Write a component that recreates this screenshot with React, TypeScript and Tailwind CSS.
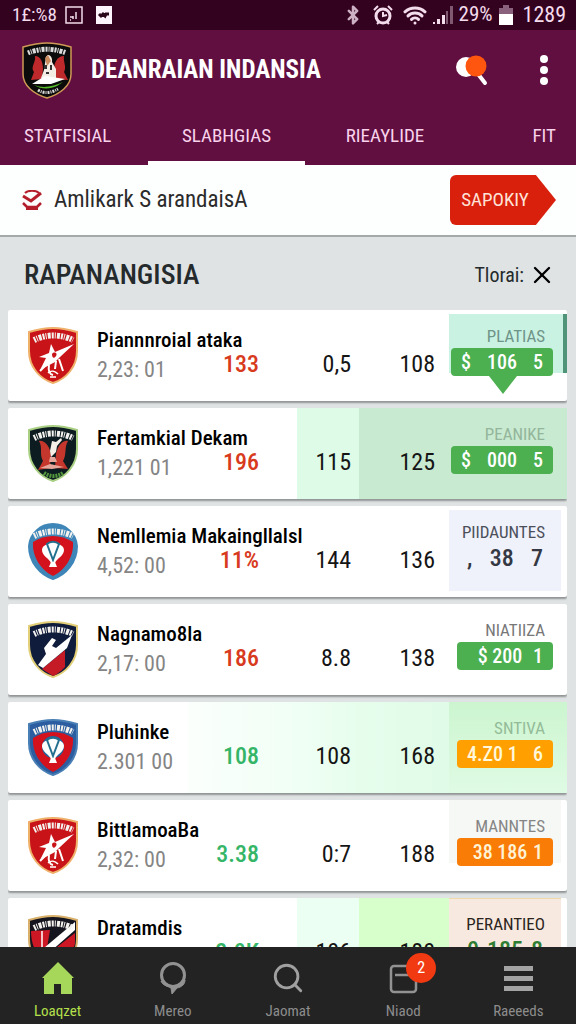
import { Bluetooth, Search, Wifi, X } from "lucide-react";

type Team = {
  name: string;
  time: string;
  values: [string, string, string];
  up?: boolean;
  crest: "red" | "black" | "blue" | "navy" | "shield" | "stripe";
  label: string;
  labelClass: string;
  badge: string[];
  badgeClass: string;
  cells: [string, string, string, string];
  pointer?: boolean;
};

const teams: Team[] = [
  {
    name: "Piannnroial ataka",
    time: "2,23: 01",
    values: ["133", "0,5", "108"],
    crest: "red",
    label: "PLATIAS",
    labelClass: "text-[#6f9488]",
    badge: ["$", "106", "5"],
    badgeClass: "bg-[#4caf50] text-white w-[102px] text-xl",
    cells: ["", "", "", "bg-[#c9f2e3] mt-1 mb-7 border-r-4 border-[#4f9478]"],
    pointer: true,
  },
  {
    name: "Fertamkial Dekam",
    time: "1,221 01",
    values: ["196", "115", "125"],
    crest: "black",
    label: "PEANIKE",
    labelClass: "text-[#93b59b]",
    badge: ["$", "000", "5"],
    badgeClass: "bg-[#4caf50] text-white w-[102px] text-xl",
    cells: ["", "bg-[#defbe8]", "bg-[#c8ead0]", "bg-[#c8ead0]"],
  },
  {
    name: "Nemllemia Makaingllalsl",
    time: "4,52: 00",
    values: ["11%", "144", "136"],
    crest: "blue",
    label: "PIIDAUNTES",
    labelClass: "text-[#4b4f5a]",
    badge: [",", "38", "7"],
    badgeClass: "w-[96px] text-[#343842] text-2xl",
    cells: ["", "", "", "bg-[#eff1fb] mt-1 mb-1.5 mr-1.5"],
  },
  {
    name: "Nagnamo8la",
    time: "2,17: 00",
    values: ["186", "8.8", "138"],
    crest: "navy",
    label: "NIATIIZA",
    labelClass: "text-[#777]",
    badge: ["", "$ 200", "1"],
    badgeClass: "bg-[#4caf50] text-white w-[96px] text-xl",
    cells: ["", "", "", ""],
  },
  {
    name: "Pluhinke",
    time: "2.301 00",
    values: ["108", "108", "168"],
    up: true,
    crest: "shield",
    label: "SNTIVA",
    labelClass: "text-[#93bb98]",
    badge: ["4.Z0 1", "6"],
    badgeClass: "bg-[#ffa000] text-[#fff8dc] w-[96px] text-xl",
    cells: [
      "bg-linear-to-r from-[#fbfffc] to-[#f0fff5]",
      "bg-linear-to-r from-[#f0fff5] to-[#e6fdec]",
      "bg-linear-to-r from-[#e6fdec] to-[#e0fbe8]",
      "bg-linear-to-b from-[#ccf5cf] to-[#dffbe4]",
    ],
  },
  {
    name: "BittlamoaBa",
    time: "2,32: 00",
    values: ["3.38", "0:7", "188"],
    up: true,
    crest: "red",
    label: "MANNTES",
    labelClass: "text-[#858585]",
    badge: ["", "38 186", "1"],
    badgeClass: "bg-[#f97c06] text-[#fff3d6] w-[96px] text-xl",
    cells: ["", "", "", "bg-[#f5f8f5] mb-7 mr-1.5"],
  },
  {
    name: "Dratamdis",
    time: "2,30: 00",
    values: ["2.0K", "106", "180"],
    up: true,
    crest: "stripe",
    label: "PERANTIEO",
    labelClass: "text-[#2c2420]",
    badge: ["0", "185", "8"],
    badgeClass: "w-[96px] text-[#2e7d32] text-2xl",
    cells: ["", "bg-[#ebfff3]", "bg-[#d6ffcb]", "bg-[#f7e9df] mr-1.5 border-t border-[#f0d9a8]"],
  },
];

const crestColors = {
  red: { edge: "#efb06a", fill: "#c81418" },
  black: { edge: "#a9cf83", fill: "#0d1c20" },
  blue: { edge: "#3f86b8", fill: "#3f86b8" },
  navy: { edge: "#e3cf77", fill: "#101c3c" },
  shield: { edge: "#4a7fb5", fill: "#2b5da0" },
  stripe: { edge: "#d9b06a", fill: "#15151f" },
};

function Crest({ kind }: { kind: Team["crest"] }) {
  const c = crestColors[kind];
  const outline =
    kind === "blue"
      ? "M25 1C37 1 48 10 49 23c0 16-11 29-24 33C12 52 1 39 1 23 2 10 13 1 25 1Z"
      : "M25 1c9 0 17 2 24 4v19c0 16-11 28-24 32C12 52 1 40 1 24V5c7-2 15-4 24-4Z";
  return (
    <svg viewBox="0 0 50 57" className="h-[57px] w-[50px]" aria-hidden="true">
      <path d={outline} fill={c.fill} stroke={c.edge} strokeWidth="2" />
      {(kind === "blue" || kind === "shield") && (
        <>
          <path d="M5 19c12-8 28-8 40 0 1 15-8 28-20 34C13 47 4 34 5 19Z" fill="#d3121d" />
          <circle cx="25" cy="28" r="11" fill={kind === "blue" ? "#d3121d" : "#25639c"} />
          <path d="M14 27c0-9 22-9 22 0 0 6-7 8-9 13h-4c-2-5-9-7-9-13Z" fill="#fff" />
          <path d="m19 21 6 16 6-16c-3-3-9-3-12 0Z" fill="#fff" stroke="#24718f" strokeWidth="2" />
          <path d="M21 44h8l-2-5h-4Z" fill="#fff" />
        </>
      )}
      {kind === "red" && (
        <>
          <path d="m23 17 4 8 19-8-14 13-5 5-15 8 6-12-7-1 10-4Z" fill="#fff" />
          <path d="m12 44 14-14M31 32l4 12M28 34l-1 8M21 38c-1 6 0 9 4 10" stroke="#fff" strokeWidth="2" fill="none" />
          <path d="M20 46c3-3 7-2 10 1M22 50h6" stroke="#fff" strokeWidth="1.5" fill="none" />
          <path d="M24 27c2-3 6-1 4 2s-4 2-4-2Z" fill="#c81418" />
        </>
      )}
      {kind === "black" && (
        <>
          <path d="M11 16c5-1 10 4 12 13l-1 14-12 2 5-9c-4-7 0-13-4-20ZM40 16c-5-1-10 4-12 13l-1 14 13 1-5-8c4-7 1-13 5-20Z" fill="#c5372d" />
          <path d="m33 13-5 4-4-1-2 10 1 6 5-5 1-6 5-6Z" fill="#f6efe8" />
          <path d="M22 32h5l2 5h-8ZM12 43l10-4 14 3-12 2Z" fill="#e7a69b" />
          <path d="M16 48c6 4 13 4 19 0" stroke="#54983d" strokeWidth="4" strokeDasharray="2 1" fill="none" />
        </>
      )}
      {kind === "navy" && (
        <>
          <path d="M14 48 37 29v17c-5 5-9 8-12 9Z" fill="#c51b26" />
          <path d="m44 14-5 13-24 20-5-3 8-11-2-6 8-10 4 2-4 6 4 2Z" fill="#fff" />
        </>
      )}
      {kind === "stripe" && (
        <>
          <path d="M3 16 22 15l-3 18-7 9C6 36 3 26 3 16ZM47 18v10c-2 12-10 21-22 26l-10-11Z" fill="#ce1724" />
          <path d="M47 7v8L14 44l-4-6 19-16Z" fill="#fff" />
          <path d="M14 16v17" stroke="#fff" strokeWidth="1.5" />
        </>
      )}
      {/* lettering band */}
      <path d="M6 13c12-6 27-6 39 0" fill="none" stroke="#f4f2ee" strokeWidth="6" strokeDasharray="2 1 1 1.2 3 1" />
    </svg>
  );
}

function ClubLogo() {
  return (
    <svg viewBox="0 0 50 57" className="h-[57px] w-[50px]" aria-hidden="true">
      <path d="M25 1c9 0 17 2 24 4v27c0 12-11 20-24 24C12 52 1 44 1 32V5c7-2 15-4 24-4Z" fill="#0b0b0b" stroke="#cf9a56" strokeWidth="1.5" />
      <path d="M6 11c12-5 26-5 38 0" fill="none" stroke="#ddd" strokeWidth="5" strokeDasharray="2 1 1 1 3 1" />
      <path d="M13 14c6 0 8 7 8 13l-1 10-11 1 3-8c-4-5 2-9 1-16ZM42 14c-7 0-10 7-10 14v9l14 1-4-8c3-5-1-10 0-16Z" fill="#be2a2c" />
      <path d="M24 15c3-5 7 1 6 5l4 7v9H19l3-8Z" fill="#f3ece4" />
      <path d="m23 16 3-3 3 6-4 5Z" fill="#c98b5e" />
      <path d="M22 23h3v4h-3ZM28 23h2v5h-2ZM24 30h3v2h-3Z" fill="#333" />
      <path d="m10 42 13-8 20 3-14 5Z" fill="#fff" />
      <path d="M12 43c10 4 20 1 29-3l-6 4c-7 3-15 4-23-1Z" fill="#55bd28" />
      <path d="M16 48c6 4 13 3 20-1" fill="none" stroke="#ddd" strokeWidth="3" strokeDasharray="2 1 1 1" />
    </svg>
  );
}

function StatusBar() {
  return (
    <div className="flex h-[30px] shrink-0 items-center bg-[#33021f] pr-2.5 pl-3 text-xl text-[#f3dcec]">
      <span className="text-[19px]">1£:%8</span>
      <svg viewBox="0 0 18 18" className="ml-2 size-[18px]" fill="none" stroke="currentColor" strokeWidth="1.5">
        <path d="M1 1h16v16H1zM5 14h1M8 13v-3M11 13V6M5 11h3" />
      </svg>
      <svg viewBox="0 0 18 18" className="ml-3 size-[18px]">
        <path d="M1 0h16v18H1z" fill="#fdf3fa" />
        <path d="M4 8l2 2 2-2 2 2 1-2h3" fill="none" stroke="#2a0419" strokeWidth="3" />
      </svg>
      <div className="ml-auto flex items-center gap-1.5">
        <Bluetooth className="size-5 opacity-80" strokeWidth={3} />
        <svg viewBox="0 0 20 20" className="ml-1 size-5" fill="none" stroke="currentColor">
          <circle cx="10" cy="11" r="7" strokeWidth="3" />
          <path d="M1 5l4-4M19 5l-4-4M4 19l2-2M16 19l-2-2" strokeWidth="2" />
          <path d="M10 7v4l4-1" strokeWidth="2" />
        </svg>
        <Wifi className="ml-1 size-6" strokeWidth={3} />
        <svg viewBox="0 0 20 20" className="size-5" fill="currentColor">
          <path d="M0 17h2v2H0zM4 14h3v5H4zM9 10h3v9H9z" />
          <path d="M13 6h2v13h-2zM17 1h3v18h-3z" opacity=".4" />
        </svg>
        <span className="text-[21px]">29%</span>
        <svg viewBox="0 0 14 20" className="h-5 w-3.5">
          <path d="M4 0h6v3h4v6H0V3h4z" fill="#89617c" />
          <path d="M0 9h14v11H0z" fill="#fff" />
        </svg>
        <span className="ml-1 text-[22px]">1289</span>
      </div>
    </div>
  );
}

function TeamRow({ team }: { team: Team }) {
  return (
    <li className="grid h-[91px] shrink-0 grid-cols-[89px_91fr_109fr_62fr_90fr_118fr] rounded-xs bg-white text-2xl text-[#151515] shadow-[0_2px_2px_rgba(0,0,0,0.35)]">
      <div className="pt-[17px] pl-5">
        <Crest kind={team.crest} />
      </div>
      <div className="z-10 pt-3.5 whitespace-nowrap">
        <h3 className="w-0 text-[21px] leading-8 font-medium text-black">{team.name}</h3>
        <p className="text-[22px] leading-7 text-[#858585]">{team.time}</p>
      </div>
      <div className={`pt-[38px] pr-[38px] text-right font-medium ${team.up ? "text-[#35b568]" : "text-[#d83a20]"} ${team.cells[0]}`}>
        {team.values[0]}
      </div>
      <div className={`pt-[38px] pr-2 text-right ${team.cells[1]}`}>{team.values[1]}</div>
      <div className={`pt-[38px] pr-3.5 text-right ${team.cells[2]}`}>{team.values[2]}</div>
      <div className="grid">
        <div className={`col-start-1 row-start-1 ${team.cells[3]}`} />
        <div className="col-start-1 row-start-1 flex flex-col items-end pt-3.5 pr-3.5">
          <span className={`pr-2 text-[17px] leading-6 ${team.labelClass}`}>{team.label}</span>
          <div className={`flex h-7 items-center justify-between rounded-sm px-2.5 font-medium whitespace-nowrap ${team.badgeClass}`}>
            {team.badge.map((part, i) => (
              <span key={i}>{part}</span>
            ))}
          </div>
          {team.pointer && (
            <svg viewBox="0 0 28 18" className="mr-9 h-[18px] w-7">
              <path d="M0 0h28L14 18z" fill="#4caf50" />
            </svg>
          )}
        </div>
      </div>
    </li>
  );
}

const navItem = "flex flex-col items-center gap-1.5 pt-3.5 text-[15px] leading-5";

function BottomNav() {
  return (
    <nav className="grid h-[77px] shrink-0 grid-cols-5 bg-[#232323] text-[#8d8d8d]">
      <a href="#home" className={`${navItem} text-[#b5e04c]`}>
        <svg viewBox="0 0 34 34" className="size-[34px]">
          <path d="M17 1 33 17h-2v16H20V23h-7v10H3V17H1z" fill="#a6d65a" />
        </svg>
        Loaqzet
      </a>
      <a href="#mereo" className={navItem}>
        <svg viewBox="0 0 34 34" className="size-[34px]" fill="none" stroke="#929292">
          <circle cx="17" cy="14" r="11.5" strokeWidth="3" />
          <path d="M5 20c2 5 7 5 10 7l1 6 5-6c5-1 8-4 8-8-4 6-9 7-12 7s-8-1-12-6Z" fill="#929292" />
        </svg>
        Mereo
      </a>
      <a href="#search" className={navItem}>
        <Search className="size-[34px] text-[#a0a0a0]" strokeWidth={2} />
        Jaomat
      </a>
      <a href="#news" className={navItem}>
        <span className="relative">
          <svg viewBox="0 0 34 34" className="size-[34px]" fill="none" stroke="#929292" strokeWidth="2.5">
            <rect x="5" y="5" width="25" height="26" rx="3" />
            <path d="M9 14h20" />
          </svg>
          <span className="absolute -top-2 left-5 flex size-[30px] items-center justify-center rounded-full bg-[#f23a12] text-base text-white">
            2
          </span>
        </span>
        Niaod
      </a>
      <a href="#more" className={navItem}>
        <svg viewBox="0 0 34 34" className="size-[34px]" fill="#a3a3a3">
          <path d="M3 5h29v5H3zM3 15h29v5H3zM3 25h29v5H3z" />
        </svg>
        Raeeeds
      </a>
    </nav>
  );
}

export default function App() {
  return (
    <div className="flex h-screen flex-col overflow-hidden bg-[#dfe3e4] font-['Roboto_Condensed','Liberation_Sans_Narrow',Roboto,sans-serif]">
      <StatusBar />
      <header className="shrink-0 bg-[#610f40] text-white">
        <div className="flex h-20 items-center pr-5 pl-[22px]">
          <ClubLogo />
          <h1 className="ml-[19px] text-[25px] font-bold whitespace-nowrap">DEANRAIAN INDANSIA</h1>
          <button aria-label="Search" className="ml-auto">
            <svg viewBox="0 0 32 32" className="size-8">
              <circle cx="10" cy="13" r="10" fill="#fff" />
              <path d="m22 20 7 9" stroke="#fff" strokeWidth="4" strokeLinecap="round" />
              <circle cx="20" cy="12" r="10.5" fill="#ff560f" />
            </svg>
          </button>
          <button aria-label="Menu" className="ml-11 flex w-6 flex-col items-center gap-[3px]">
            <span className="size-2 rounded-full bg-white" />
            <span className="size-2 rounded-full bg-white" />
            <span className="size-2 rounded-full bg-white" />
          </button>
        </div>
        <nav className="grid h-[55px] grid-cols-[148fr_157fr_160fr_111fr] text-[19px] text-[#f9d3ec]">
          <a href="#stat" className="pt-3 pl-6">STATFISIAL</a>
          <a href="#slab" className="border-b-4 border-white pt-3 text-center">SLABHGIAS</a>
          <a href="#real" className="pt-3 text-center">RIEAYLIDE</a>
          <a href="#fit" className="pt-3 pr-5 text-right">FIT</a>
        </nav>
      </header>

      <div className="flex h-[72px] shrink-0 items-center border-b-2 border-[#a3aaa8] bg-[#fdfefe] pr-5 pl-[22px]">
        <svg viewBox="0 0 20 20" className="size-5" fill="none" stroke="#b51f2b">
          <path d="M1 6 9 11 19 3" strokeWidth="3" />
          <path d="M3 3c3-3 11-3 14 0" strokeWidth="2" />
          <path d="M1 13l4 4h10l4-4M4 19h12" strokeWidth="2.5" />
        </svg>
        <p className="ml-3 text-[23px] text-[#2b2b2b]">Amlikark S arandaisA</p>
        <button className="ml-auto h-[50px] w-[106px] rounded-md bg-[#d8200d] pr-4 text-[19px] text-[#ffe3d8] [clip-path:polygon(0_0,81%_0,100%_50%,81%_100%,0_100%)]">
          SAPOKIY
        </button>
      </div>

      <div className="flex h-[73px] shrink-0 items-center pt-0.5 pr-5 pl-6 text-[#252a2c]">
        <h2 className="text-[28px] font-medium">RAPANANGISIA</h2>
        <button className="ml-auto flex items-center gap-1 text-xl">
          Tlorai: <X className="size-7 text-black" strokeWidth={2} />
        </button>
      </div>

      <ul className="mr-[9px] ml-2 flex min-h-0 flex-1 flex-col gap-[7px] overflow-hidden">
        {teams.map((team) => (
          <TeamRow key={team.name} team={team} />
        ))}
      </ul>
      <BottomNav />
    </div>
  );
}
